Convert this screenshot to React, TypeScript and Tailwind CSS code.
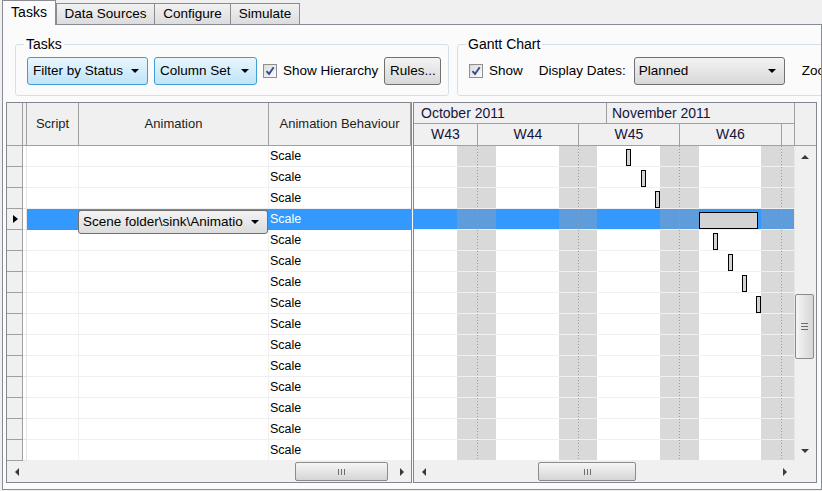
import React from 'react';

const ROWS = 15;
const SELECTED = 3;

// bar positions inside the gantt body, px from its left edge
const bars: Array<{ row: number; x: number; w: number }> = [
  { row: 0, x: 212, w: 4 },
  { row: 1, x: 227, w: 4 },
  { row: 2, x: 241, w: 4 },
  { row: 3, x: 285, w: 58 },
  { row: 4, x: 299, w: 4 },
  { row: 5, x: 314, w: 4 },
  { row: 6, x: 328, w: 4 },
  { row: 7, x: 342, w: 4 },
];

const weekends = [
  { x: 43, w: 39, line: 63.5 },
  { x: 145, w: 38, line: 164.5 },
  { x: 246, w: 39, line: 265.5 },
  { x: 347, w: 33, line: 367.5 },
];

function DownArrow() {
  return <span className="h-0 w-0 border-x-[4px] border-t-[4px] border-x-transparent border-t-black" />;
}

function CheckBox() {
  return (
    <span className="flex h-[14px] w-[14px] shrink-0 items-center justify-center border border-[#8e8f8f] bg-gradient-to-br from-[#dcdcdc] to-[#fbfbfb]">
      <svg width="10" height="10" viewBox="0 0 10 10">
        <path d="M1.5 5.2 L4 8 L8.7 1.2" fill="none" stroke="#3b4c8c" strokeWidth="2" />
      </svg>
    </span>
  );
}

function HScrollbar({ thumbLeft, thumbWidth }: { thumbLeft: number; thumbWidth: number }) {
  return (
    <div className="flex h-full flex-1 items-center bg-[#f0f0f0]">
      <div className="flex w-[17px] shrink-0 justify-center pl-[3px]">
        <span className="h-0 w-0 border-y-[4px] border-r-[4px] border-y-transparent border-r-[#3a3a3a]" />
      </div>
      <div className="flex h-full flex-1 items-center">
        <div
          className="flex h-[19px] items-center justify-center gap-[2px] rounded-[2px] border border-[#8b8b8b] bg-gradient-to-b from-[#f6f6f6] to-[#d5d5d5]"
          style={{ marginLeft: thumbLeft, width: thumbWidth }}
        >
          <span className="h-[6px] w-px bg-[#6d6d6d]" />
          <span className="h-[6px] w-px bg-[#6d6d6d]" />
          <span className="h-[6px] w-px bg-[#6d6d6d]" />
        </div>
      </div>
      <div className="flex w-[17px] shrink-0 justify-center pr-[2px]">
        <span className="h-0 w-0 border-y-[4px] border-l-[4px] border-y-transparent border-l-[#3a3a3a]" />
      </div>
    </div>
  );
}

function TaskGrid() {
  return (
    <div className="flex h-[381px] w-[406px] shrink-0 flex-col border border-[#828790] bg-white">
      <div className="flex h-[43px] shrink-0 border-b border-[#a0a0a0] bg-[#f0f0f0] text-[13px] text-[#1e1e1e]">
        <div className="w-[16px] border-r border-[#a0a0a0]" />
        <div className="w-[4px] border-r border-[#a0a0a0]" />
        <div className="flex w-[52px] items-center justify-center border-r border-[#a0a0a0]">Script</div>
        <div className="flex w-[190px] items-center justify-center border-r border-[#a0a0a0]">Animation</div>
        <div className="flex w-[142px] items-center justify-center border-r border-[#a0a0a0] whitespace-nowrap">
          Animation Behaviour
        </div>
      </div>
      <div className="flex-1 overflow-hidden">
        {Array.from({ length: ROWS }).map((_, i) => {
          const sel = i === SELECTED;
          return (
            <div key={i} className="flex h-[21px] text-[12.5px]">
              <div className="flex w-[16px] items-center justify-center border-r border-b border-[#a0a0a0] bg-[#f0f0f0]">
                {sel && <span className="ml-[2px] h-0 w-0 border-y-[4px] border-l-[5px] border-y-transparent border-l-black" />}
              </div>
              <div className="w-[4px] border-r border-b border-[#e4e4e4]" />
              <div className={`w-[52px] border-r border-b ${sel ? 'border-[#3399ff] bg-[#3399ff]' : 'border-[#f0f0f0]'}`} />
              <div className={`relative w-[190px] border-r border-b ${sel ? 'border-[#3399ff] bg-[#3399ff]' : 'border-[#f0f0f0]'}`}>
                {sel && (
                  <div className="absolute top-[1px] -left-px z-10 flex h-[24px] w-[190px] items-center justify-between rounded-[3px] border border-[#707070] bg-gradient-to-b from-[#f3f3f3] to-[#dcdcdc] pr-[8px] pl-[4px] text-[13.5px] whitespace-nowrap text-black">
                    <span>Scene folder\sink\Animatio</span>
                    <DownArrow />
                  </div>
                )}
              </div>
              <div
                className={`flex w-[142px] items-center border-b pl-[1px] ${sel ? 'border-[#3399ff] bg-[#3399ff] text-white' : 'border-[#f0f0f0] text-black'}`}
              >
                Scale
              </div>
            </div>
          );
        })}
      </div>
      <div className="flex h-[21px] shrink-0">
        <HScrollbar thumbLeft={271} thumbWidth={93} />
      </div>
    </div>
  );
}

function GanttBody() {
  return (
    <svg width="380" height="315" className="block shrink-0">
      <rect x="0" y="0" width="380" height="315" fill="#ffffff" />
      {weekends.map((b) => (
        <rect key={b.x} x={b.x} y="0" width={b.w} height="315" fill="#d9d9d9" />
      ))}
      <rect x="0" y={SELECTED * 21} width="380" height="21" fill="#3399ff" />
      {weekends.map((b) => (
        <rect key={'s' + b.x} x={b.x} y={SELECTED * 21} width={b.w} height="21" fill="#5e9cdc" />
      ))}
      {weekends.map((b) => (
        <line key={'l' + b.x} x1={b.line} y1="0" x2={b.line} y2="315" stroke="#9a9a9a" strokeDasharray="1 2" />
      ))}
      {Array.from({ length: ROWS }).map((_, i) => (
        <line key={'r' + i} x1="0" y1={21 * i + 20.5} x2="380" y2={21 * i + 20.5} stroke="#f0f0f0" />
      ))}
      {bars.map((b) => (
        <rect
          key={b.row}
          x={b.x + 0.5}
          y={21 * b.row + 3.5}
          width={b.w}
          height="16"
          fill="#d3d3d3"
          stroke="#000000"
        />
      ))}
    </svg>
  );
}

function GanttGrid() {
  const weeks = [
    { label: 'W43', w: 'w-[64px]' },
    { label: 'W44', w: 'w-[101px]' },
    { label: 'W45', w: 'w-[101px]' },
    { label: 'W46', w: 'w-[102px]' },
  ];
  return (
    <div className="flex h-[381px] w-[404px] shrink-0 flex-col border border-[#828790] bg-white">
      <div className="flex h-[43px] shrink-0 bg-[#f0f0f0] text-[14px] text-[#14143c]">
        <div className="flex w-[380px] flex-col border-b border-[#a0a0a0]">
          <div className="flex h-[21px] border-b border-[#a0a0a0]">
            <div className="flex w-[193px] items-center border-r border-[#a0a0a0] pl-[7px]">October 2011</div>
            <div className="flex flex-1 items-center pl-[5px]">November 2011</div>
          </div>
          <div className="flex flex-1">
            {weeks.map((w) => (
              <div key={w.label} className={`flex ${w.w} items-center justify-center border-r border-[#a0a0a0]`}>
                {w.label}
              </div>
            ))}
            <div className="flex-1" />
          </div>
        </div>
        <div className="w-[22px] border-b border-l border-[#a0a0a0]" />
      </div>
      <div className="flex flex-1 overflow-hidden">
        <GanttBody />
        <div className="flex w-[22px] flex-col border-l border-[#e6e6e6] bg-[#f0f0f0]">
          <div className="flex h-[21px] shrink-0 items-center justify-center pr-[2px]">
            <span className="h-0 w-0 border-x-[4px] border-b-[4px] border-x-transparent border-b-[#3a3a3a]" />
          </div>
          <div className="flex-1">
            <div className="mt-[127px] flex h-[65px] w-[19px] flex-col items-center justify-center gap-[2px] rounded-[2px] border border-[#8b8b8b] bg-gradient-to-r from-[#f6f6f6] to-[#d5d5d5]">
              <span className="h-px w-[7px] bg-[#6d6d6d]" />
              <span className="h-px w-[7px] bg-[#6d6d6d]" />
              <span className="h-px w-[7px] bg-[#6d6d6d]" />
            </div>
          </div>
          <div className="flex h-[21px] shrink-0 items-center justify-center pr-[2px]">
            <span className="h-0 w-0 border-x-[4px] border-t-[4px] border-x-transparent border-t-[#3a3a3a]" />
          </div>
        </div>
      </div>
      <div className="flex h-[21px] shrink-0">
        <div className="flex w-[380px]">
          <HScrollbar thumbLeft={107} thumbWidth={98} />
        </div>
        <div className="w-[22px] bg-[#f0f0f0]" />
      </div>
    </div>
  );
}

export default function App() {
  const btn = 'flex h-[28px] shrink-0 items-center rounded-[3px] border whitespace-nowrap';
  return (
    <div className="h-[491px] w-[822px] overflow-hidden bg-[#f0f0f0] font-['Liberation_Sans',Arial,sans-serif] text-[13.5px] text-black">
      <div className="flex h-[24px] items-end pl-[2px]">
        <div className="relative z-10 -mb-px flex h-[25px] w-[54px] items-center justify-center border border-b-0 border-[#898c95] bg-[#fbfbfb] pb-[2px] text-[14px]">
          Tasks
        </div>
        <div className="flex h-[21px] w-[98px] items-center justify-center border-t border-l border-[#898c95] bg-gradient-to-b from-[#f2f2f2] to-[#dcdcdc]">
          Data Sources
        </div>
        <div className="flex h-[21px] w-[76px] items-center justify-center border-t border-l border-[#898c95] bg-gradient-to-b from-[#f2f2f2] to-[#dcdcdc]">
          Configure
        </div>
        <div className="flex h-[21px] w-[70px] items-center justify-center border-x border-t border-[#898c95] bg-gradient-to-b from-[#f2f2f2] to-[#dcdcdc]">
          Simulate
        </div>
      </div>
      <div className="ml-[2px] h-[466px] w-[820px] overflow-hidden border border-[#898c95] bg-[#fbfbfb]">
        <div className="flex gap-[8px] pt-[12px] pl-[12px]">
          <fieldset className="h-[59px] w-[434px] min-w-0 shrink-0 overflow-hidden rounded-[3px] border border-[#d5dfe5] px-[11px] pt-[5px]">
            <legend className="-ml-[3px] px-[2px] text-[14px] leading-[15px]">Tasks</legend>
            <div className="flex items-center whitespace-nowrap">
              <div className={`${btn} w-[121px] justify-between border-[#3c9fd5] bg-gradient-to-b from-[#e8f6fd] to-[#bfe4f8] pr-[8px] pl-[5px]`}>
                <span>Filter by Status</span>
                <DownArrow />
              </div>
              <div className={`${btn} ml-[6px] w-[103px] justify-between border-[#3c9fd5] bg-gradient-to-b from-[#e8f6fd] to-[#bfe4f8] pr-[7px] pl-[5px]`}>
                <span>Column Set</span>
                <DownArrow />
              </div>
              <div className="ml-[6px]">
                <CheckBox />
              </div>
              <span className="ml-[6px]">Show Hierarchy</span>
              <div className={`${btn} ml-[6px] w-[57px] justify-center border-[#707070] bg-gradient-to-b from-[#f3f3f3] to-[#d8d8d8]`}>
                Rules...
              </div>
            </div>
          </fieldset>
          <fieldset className="h-[59px] w-[400px] min-w-0 shrink-0 rounded-[3px] border border-[#d5dfe5] px-[11px] pt-[5px]">
            <legend className="-ml-[3px] px-[2px] text-[14px] leading-[15px]">Gantt Chart</legend>
            <div className="flex items-center whitespace-nowrap">
              <CheckBox />
              <span className="ml-[6px]">Show</span>
              <span className="ml-[16px]">Display Dates:</span>
              <div className={`${btn} ml-[8px] w-[151px] justify-between border-[#707070] bg-gradient-to-b from-[#f3f3f3] to-[#d8d8d8] pr-[8px] pl-[4px]`}>
                <span>Planned</span>
                <DownArrow />
              </div>
              <span className="ml-[17px]">Zoom:</span>
            </div>
          </fieldset>
        </div>
        <div className="mt-[6px] flex gap-[1px] pl-[3px]">
          <TaskGrid />
          <GanttGrid />
        </div>
      </div>
    </div>
  );
}
